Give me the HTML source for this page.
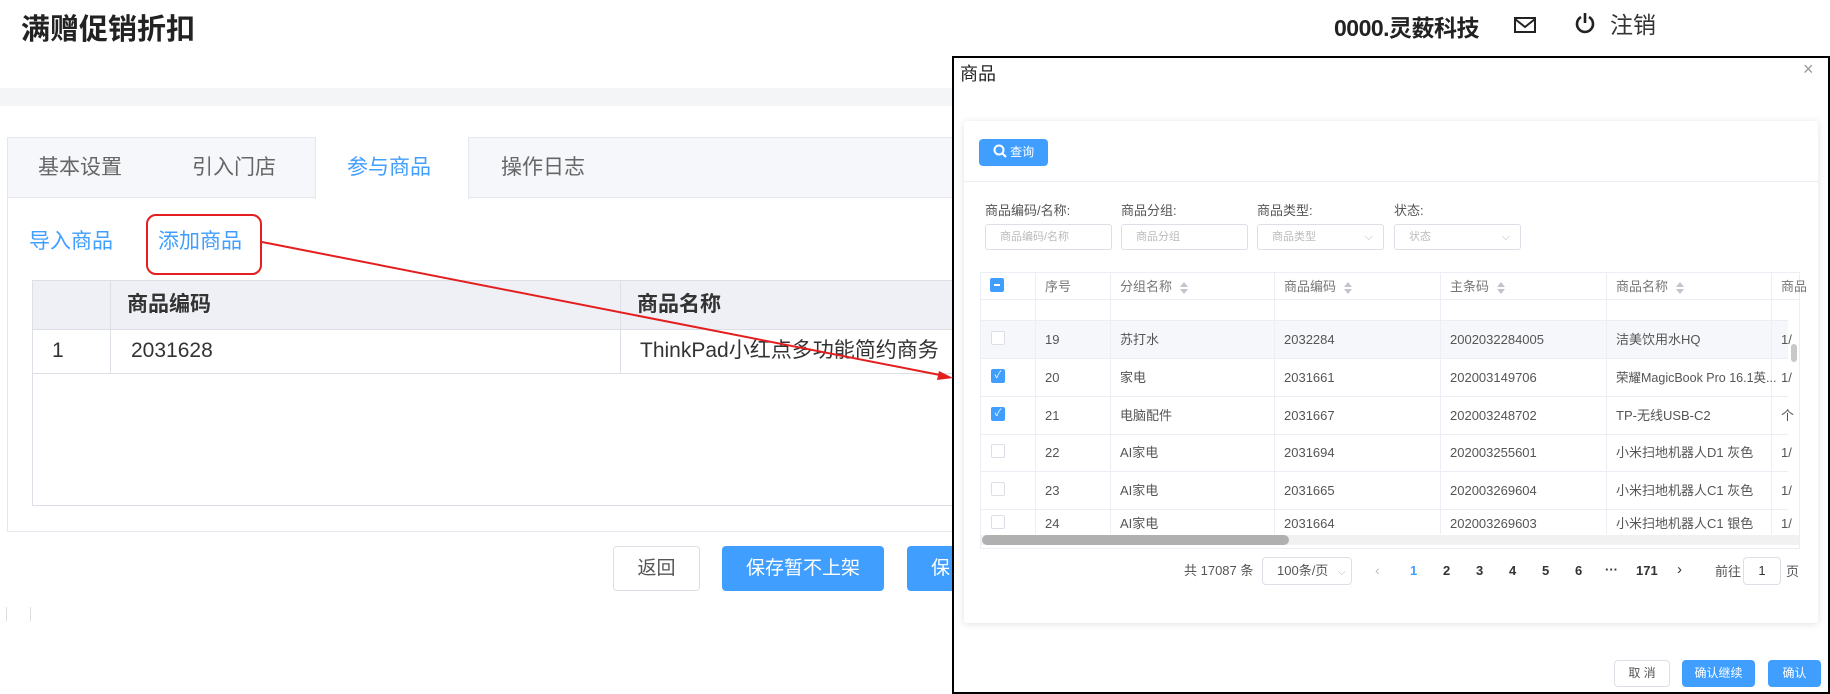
<!DOCTYPE html>
<html><head><meta charset="utf-8"><style>
*{box-sizing:border-box;margin:0;padding:0}
body{width:1830px;height:694px;position:relative;overflow:hidden;background:#fff;font-family:"Liberation Sans","Noto Sans CJK SC",sans-serif;color:#333;line-height:1.25}
.a{position:absolute;white-space:nowrap}
.tab{position:absolute;top:137px;height:61px;line-height:61px;font-size:21px;color:#666}
.b{position:absolute;border:1px solid #dcdfe6;border-radius:4px;text-align:center}
.bp{position:absolute;background:#409eff;color:#fff;border-radius:4px;text-align:center}
.th{position:absolute;font-size:13px;color:#777}
.cell{position:absolute;font-size:13px;color:#555;line-height:16px}
.cb{position:absolute;width:14px;height:14px;border:1px solid #dcdfe6;border-radius:2px;background:#fff}
.cbx{background:#409eff;border-color:#409eff}
.inp{position:absolute;top:224px;height:26px;border:1px solid #dcdfe6;border-radius:3px;font-size:11px;color:#bbb;line-height:24px;padding-left:14px}
.sort{display:inline-block;margin-left:8px;vertical-align:middle;width:8px;height:12px;position:relative}
.sort:before,.sort:after{content:"";position:absolute;left:0;border-left:4px solid transparent;border-right:4px solid transparent}
.sort:before{top:0;border-bottom:5px solid #c0c4cc}
.sort:after{bottom:0;border-top:5px solid #c0c4cc}
</style></head><body>
<div class="a" style="left:21px;top:12px;font-size:29px;font-weight:bold;color:#222">满赠促销折扣</div>
<div class="a" style="left:0;top:88px;width:952px;height:18px;background:#f4f5f7"></div>

<div class="a" style="left:7px;top:137px;width:950px;height:395px;border:1px solid #e4e7ed"></div>
<div class="a" style="left:8px;top:138px;width:945px;height:60px;background:#f5f7fa;border-bottom:1px solid #e4e7ed"></div>
<div class="a" style="left:315px;top:137px;width:154px;height:62px;background:#fff;border-left:1px solid #e4e7ed;border-right:1px solid #e4e7ed"></div>
<div class="tab" style="left:38px">基本设置</div>
<div class="tab" style="left:192px">引入门店</div>
<div class="tab" style="left:347px;color:#409eff">参与商品</div>
<div class="tab" style="left:501px">操作日志</div>
<div class="a" style="left:29px;top:229px;font-size:21px;color:#409eff">导入商品</div>
<div class="a" style="left:158px;top:229px;font-size:21px;color:#409eff">添加商品</div>
<div class="a" style="left:146px;top:214px;width:116px;height:61px;border:2px solid #e41e1e;border-radius:10px"></div>

<div class="a" style="left:32px;top:280px;width:925px;height:226px;border:1px solid #dcdfe6;border-right:none"></div>
<div class="a" style="left:33px;top:281px;width:924px;height:49px;background:#eef0f5;border-bottom:1px solid #dcdfe6"></div>
<div class="a" style="left:32px;top:330px;width:925px;height:44px;border-bottom:1px solid #dcdfe6"></div>
<div class="a" style="left:110px;top:280px;width:1px;height:94px;background:#dcdfe6"></div>
<div class="a" style="left:620px;top:280px;width:1px;height:94px;background:#dcdfe6"></div>
<div class="a" style="left:127px;top:292px;font-size:21px;font-weight:bold;color:#333">商品编码</div>
<div class="a" style="left:637px;top:292px;font-size:21px;font-weight:bold;color:#333">商品名称</div>
<div class="a" style="left:52px;top:338px;font-size:21px;color:#333">1</div>
<div class="a" style="left:131px;top:338px;font-size:21px;color:#333">2031628</div>
<div class="a" style="left:640px;top:338px;font-size:21px;color:#333">ThinkPad小红点多功能简约商务</div>

<div class="b" style="left:613px;top:546px;width:87px;height:45px;line-height:43px;font-size:19px;color:#555">返回</div>
<div class="bp" style="left:722px;top:546px;width:162px;height:45px;line-height:45px;font-size:19px">保存暂不上架</div>
<div class="bp" style="left:907px;top:546px;width:60px;height:45px;line-height:45px;font-size:19px;text-align:left;padding-left:24px">保</div>
<div class="a" style="left:6px;top:607px;width:1px;height:14px;background:#ddd"></div>
<div class="a" style="left:30px;top:607px;width:1px;height:14px;background:#ddd"></div>

<div class="a" style="left:1334px;top:14px;font-size:23px;font-weight:bold;color:#222;letter-spacing:-0.5px">0000.灵薮科技</div>
<svg class="a" style="left:1514px;top:17px" width="22" height="16" viewBox="0 0 22 16"><rect x="1" y="1" width="20" height="14" fill="none" stroke="#222" stroke-width="2"/><path d="M1 2l10 8 10-8" fill="none" stroke="#222" stroke-width="2"/></svg>
<svg class="a" style="left:1575px;top:12px" width="20" height="22" viewBox="0 0 20 22"><path d="M6 5a8 8 0 1 0 8 0" fill="none" stroke="#222" stroke-width="2.6"/><path d="M10 1v10" stroke="#222" stroke-width="2.6"/></svg>
<div class="a" style="left:1610px;top:11px;font-size:23px;color:#333">注销</div>

<div class="a" style="left:952px;top:56px;width:878px;height:638px;border:2px solid #000;background:#fff"></div>
<div class="a" style="left:960px;top:63px;font-size:18px;color:#222">商品</div>
<div class="a" style="left:1803px;top:58px;font-size:18px;color:#999">×</div>
<div class="a" style="left:964px;top:121px;width:854px;height:502px;background:#fff;box-shadow:0 1px 8px rgba(0,0,0,.12);border-radius:3px"></div>
<div class="a" style="left:964px;top:181px;width:854px;height:1px;background:#ebeef5"></div>
<div class="bp" style="left:979px;top:139px;width:69px;height:27px;line-height:27px;font-size:12px"><svg width="14" height="14" viewBox="0 0 14 14" style="vertical-align:-2px"><circle cx="6" cy="6" r="4.5" fill="none" stroke="#fff" stroke-width="2"/><path d="M9.5 9.5l3.5 3.5" stroke="#fff" stroke-width="2"/></svg> 查询</div>
<div class="a" style="left:985px;top:203px;font-size:13px;color:#555">商品编码/名称:</div>
<div class="a" style="left:1121px;top:203px;font-size:13px;color:#555">商品分组:</div>
<div class="a" style="left:1257px;top:203px;font-size:13px;color:#555">商品类型:</div>
<div class="a" style="left:1394px;top:203px;font-size:13px;color:#555">状态:</div>
<div class="inp" style="left:985px;width:127px">商品编码/名称</div>
<div class="inp" style="left:1121px;width:127px">商品分组</div>
<div class="inp" style="left:1257px;width:127px">商品类型<span style="position:absolute;right:10px;color:#bbb">⌵</span></div>
<div class="inp" style="left:1394px;width:127px">状态<span style="position:absolute;right:10px;color:#bbb">⌵</span></div>

<div class="a" style="left:980px;top:272px;width:820px;height:277px;border:1px solid #ebeef5"></div>
<div class="a" style="left:981px;top:273px;width:818px;height:27px;border-bottom:1px solid #ebeef5"></div>
<div class="a" style="left:981px;top:320px;width:807px;height:38px;background:#f5f7fa"></div>
<div class="a" style="left:981px;top:320px;width:807px;height:1px;background:#ebeef5"></div>
<div class="a" style="left:981px;top:358px;width:807px;height:1px;background:#ebeef5"></div>
<div class="a" style="left:981px;top:396px;width:807px;height:1px;background:#ebeef5"></div>
<div class="a" style="left:981px;top:434px;width:807px;height:1px;background:#ebeef5"></div>
<div class="a" style="left:981px;top:471px;width:807px;height:1px;background:#ebeef5"></div>
<div class="a" style="left:981px;top:509px;width:807px;height:1px;background:#ebeef5"></div>
<div class="a" style="left:1035px;top:272px;width:1px;height:262px;background:#ebeef5"></div>
<div class="a" style="left:1110px;top:272px;width:1px;height:262px;background:#ebeef5"></div>
<div class="a" style="left:1274px;top:272px;width:1px;height:262px;background:#ebeef5"></div>
<div class="a" style="left:1440px;top:272px;width:1px;height:262px;background:#ebeef5"></div>
<div class="a" style="left:1606px;top:272px;width:1px;height:262px;background:#ebeef5"></div>
<div class="a" style="left:1771px;top:272px;width:1px;height:262px;background:#ebeef5"></div>
<div class="cb cbx" style="left:990px;top:278px"><div style="position:absolute;left:3px;top:5px;width:6px;height:2px;background:#fff"></div></div>
<div class="th" style="left:1045px;top:279px">序号</div>
<div class="th" style="left:1120px;top:279px">分组名称<span class="sort"></span></div>
<div class="th" style="left:1284px;top:279px">商品编码<span class="sort"></span></div>
<div class="th" style="left:1450px;top:279px">主条码<span class="sort"></span></div>
<div class="th" style="left:1616px;top:279px">商品名称<span class="sort"></span></div>
<div class="th" style="left:1781px;top:279px">商品</div>
<div class="a" style="left:1788px;top:300px;width:11px;height:234px;background:#fff"></div>
<div class="a" style="left:1791px;top:344px;width:6px;height:18px;background:#c8c8c8;border-radius:3px"></div>
<div class="a" style="left:981px;top:535px;width:818px;height:10px;background:#f1f1f1"></div>
<div class="a" style="left:982px;top:535px;width:307px;height:10px;background:#b0b0b0;border-radius:5px"></div>

<div class="cb" style="left:991px;top:331px"></div><div class="cell" style="left:1045px;top:332px">19</div><div class="cell" style="left:1120px;top:332px">苏打水</div><div class="cell" style="left:1284px;top:332px">2032284</div><div class="cell" style="left:1450px;top:332px">2002032284005</div><div class="cell" style="left:1616px;top:332px">洁美饮用水HQ</div><div class="cell" style="left:1781px;top:332px">1/</div>
<div class="cb cbx" style="left:991px;top:369px;color:#fff;font-size:10px;line-height:12px;text-align:center">✓</div><div class="cell" style="left:1045px;top:370px">20</div><div class="cell" style="left:1120px;top:370px">家电</div><div class="cell" style="left:1284px;top:370px">2031661</div><div class="cell" style="left:1450px;top:370px">202003149706</div><div class="cell" style="left:1616px;top:370px;font-size:12.5px">荣耀MagicBook Pro 16.1英...</div><div class="cell" style="left:1781px;top:370px">1/</div>
<div class="cb cbx" style="left:991px;top:407px;color:#fff;font-size:10px;line-height:12px;text-align:center">✓</div><div class="cell" style="left:1045px;top:408px">21</div><div class="cell" style="left:1120px;top:408px">电脑配件</div><div class="cell" style="left:1284px;top:408px">2031667</div><div class="cell" style="left:1450px;top:408px">202003248702</div><div class="cell" style="left:1616px;top:408px">TP-无线USB-C2</div><div class="cell" style="left:1781px;top:408px">个</div>
<div class="cb" style="left:991px;top:444px"></div><div class="cell" style="left:1045px;top:445px">22</div><div class="cell" style="left:1120px;top:445px">AI家电</div><div class="cell" style="left:1284px;top:445px">2031694</div><div class="cell" style="left:1450px;top:445px">202003255601</div><div class="cell" style="left:1616px;top:445px">小米扫地机器人D1 灰色</div><div class="cell" style="left:1781px;top:445px">1/</div>
<div class="cb" style="left:991px;top:482px"></div><div class="cell" style="left:1045px;top:483px">23</div><div class="cell" style="left:1120px;top:483px">AI家电</div><div class="cell" style="left:1284px;top:483px">2031665</div><div class="cell" style="left:1450px;top:483px">202003269604</div><div class="cell" style="left:1616px;top:483px">小米扫地机器人C1 灰色</div><div class="cell" style="left:1781px;top:483px">1/</div>
<div class="cb" style="left:991px;top:515px"></div><div class="cell" style="left:1045px;top:516px">24</div><div class="cell" style="left:1120px;top:516px">AI家电</div><div class="cell" style="left:1284px;top:516px">2031664</div><div class="cell" style="left:1450px;top:516px">202003269603</div><div class="cell" style="left:1616px;top:516px">小米扫地机器人C1 银色</div><div class="cell" style="left:1781px;top:516px">1/</div>

<div class="a" style="left:1184px;top:563px;font-size:13px;color:#555">共 17087 条</div>
<div class="b" style="left:1262px;top:557px;width:90px;height:28px;line-height:26px;font-size:13px;color:#555;text-align:left;padding-left:14px">100条/页 <span style="color:#bbb;font-size:10px;margin-left:6px">⌵</span></div>
<div class="a" style="left:1375px;top:562px;font-size:14px;color:#bbb">‹</div>
<div class="a" style="left:1410px;top:563px;font-size:13px;color:#409eff;font-weight:bold">1</div>
<div class="a" style="left:1443px;top:563px;font-size:13px;font-weight:bold;color:#333">2</div>
<div class="a" style="left:1476px;top:563px;font-size:13px;font-weight:bold;color:#333">3</div>
<div class="a" style="left:1509px;top:563px;font-size:13px;font-weight:bold;color:#333">4</div>
<div class="a" style="left:1542px;top:563px;font-size:13px;font-weight:bold;color:#333">5</div>
<div class="a" style="left:1575px;top:563px;font-size:13px;font-weight:bold;color:#333">6</div>
<div class="a" style="left:1605px;top:562px;font-size:13px;font-weight:bold;color:#333">···</div>
<div class="a" style="left:1636px;top:563px;font-size:13px;font-weight:bold;color:#333">171</div>
<div class="a" style="left:1677px;top:561px;font-size:15px;color:#333">›</div>
<div class="a" style="left:1715px;top:564px;font-size:13px;color:#555">前往</div>
<div class="b" style="left:1743px;top:557px;width:38px;height:28px;line-height:26px;font-size:13px;color:#333">1</div>
<div class="a" style="left:1786px;top:564px;font-size:13px;color:#555">页</div>

<div class="b" style="left:1614px;top:660px;width:56px;height:27px;line-height:25px;font-size:12px;color:#555">取 消</div>
<div class="bp" style="left:1682px;top:660px;width:73px;height:27px;line-height:27px;font-size:12px">确认继续</div>
<div class="bp" style="left:1768px;top:660px;width:53px;height:27px;line-height:27px;font-size:12px">确认</div>

<svg class="a" style="left:0;top:0" width="1830" height="694"><line x1="262" y1="242" x2="945" y2="376" stroke="#e41e1e" stroke-width="2"/><path d="M953 378l-14 -7 -2 9z" fill="#e41e1e"/></svg>
</body></html>
